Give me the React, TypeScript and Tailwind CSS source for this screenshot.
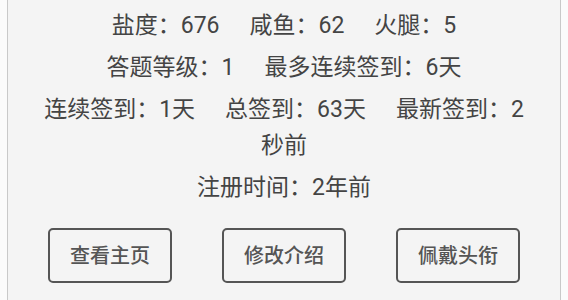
const stats = [
  ["盐度：676", "咸鱼：62", "火腿：5"],
  ["答题等级：1", "最多连续签到：6天"],
  ["连续签到：1天", "总签到：63天", "最新签到：2秒前"],
  ["注册时间：2年前"],
];

const actions = ["查看主页", "修改介绍", "佩戴头衔"];

export default function App() {
  return (
    <div
      className="h-[300px] w-full bg-[#fbfbfb] px-[7px]"
      style={{ fontFamily: 'Roboto, "Noto Sans CJK SC", sans-serif' }}
    >
      <div className="flex h-full flex-col items-center border-x border-[#c9c9c9] bg-[#f4f4f4] pt-[8px]">
        <div className="w-[490px] text-center text-[23px] leading-[36px] text-[#444]">
          {stats.map((row, i) => (
            <p key={i} className="mb-[6px]">
              {row.map((item, j) => (
                <span key={j} className={j < row.length - 1 ? "mr-[30px]" : ""}>
                  {item}
                </span>
              ))}
            </p>
          ))}
        </div>
        <div className="mt-[16px] flex gap-[50px]">
          {actions.map((label) => (
            <button
              key={label}
              className="flex h-[55px] w-[124px] items-center justify-center rounded-[5px] border-2 border-[#555] text-[20px] font-medium text-[#555]"
            >
              {label}
            </button>
          ))}
        </div>
      </div>
    </div>
  );
}
